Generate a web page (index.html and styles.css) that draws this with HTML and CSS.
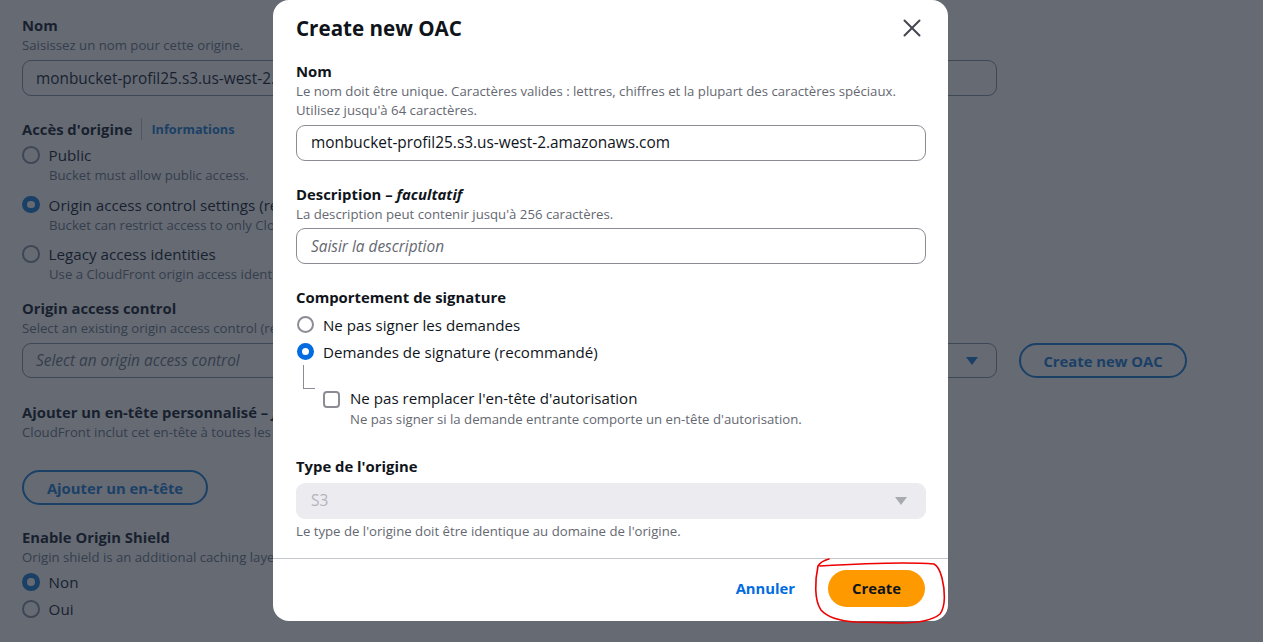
FILE: index.html
```html
<!DOCTYPE html>
<html lang="fr">
<head>
<meta charset="utf-8">
<title>Create new OAC</title>
<link rel="stylesheet" href="styles.css">
</head>
<body>
<div class="page">
  <section class="fld">
    <div class="lbl">Nom</div>
    <div class="dsc">Saisissez un nom pour cette origine.</div>
    <div class="inp bg-inp">monbucket-profil25.s3.us-west-2.amazonaws.com</div>
  </section>

  <section class="fld access">
    <div class="lbl-row"><span class="lbl">Accès d'origine</span><span class="sep"></span><span class="info">Informations</span></div>
    <div class="radios">
      <div class="ritem">
        <div class="rrow"><span class="radio"></span><span class="rtxt">Public</span></div>
        <div class="rdsc">Bucket must allow public access.</div>
      </div>
      <div class="ritem">
        <div class="rrow"><span class="radio on"></span><span class="rtxt">Origin access control settings (recommended)</span></div>
        <div class="rdsc">Bucket can restrict access to only CloudFront.</div>
      </div>
      <div class="ritem">
        <div class="rrow"><span class="radio"></span><span class="rtxt">Legacy access identities</span></div>
        <div class="rdsc">Use a CloudFront origin access identity (OAI) to access the S3 bucket.</div>
      </div>
    </div>
  </section>

  <section class="fld oac">
    <div class="lbl">Origin access control</div>
    <div class="dsc">Select an existing origin access control (recommended) or create a new control.</div>
    <div class="sel-row">
      <div class="inp bg-inp sel"><span class="ph">Select an origin access control</span><span class="caret bg-caret"></span></div>
      <span class="btn-normal">Create new OAC</span>
    </div>
  </section>

  <section class="fld hdr">
    <div class="lbl">Ajouter un en-tête personnalisé – <i>facultatif</i></div>
    <div class="dsc">CloudFront inclut cet en-tête à toutes les demandes qu'il envoie à votre origine.</div>
    <span class="btn-normal add">Ajouter un en-tête</span>
  </section>

  <section class="fld shield">
    <div class="lbl">Enable Origin Shield</div>
    <div class="dsc">Origin shield is an additional caching layer that can help reduce the load on your origin and help protect its availability.</div>
    <div class="radios tight">
      <div class="rrow"><span class="radio on"></span><span class="rtxt">Non</span></div>
      <div class="rrow"><span class="radio"></span><span class="rtxt">Oui</span></div>
    </div>
  </section>
</div>

<div class="overlay">
  <div class="modal" role="dialog">
    <div class="m-head">
      <h2 class="m-title">Create new OAC</h2>
      <span class="close" aria-label="Fermer">
        <svg width="18" height="18" viewBox="0 0 18 18"><path d="M1.5 1.5 L16.5 16.5 M16.5 1.5 L1.5 16.5" stroke="#424650" stroke-width="2" fill="none" stroke-linecap="round"/></svg>
      </span>
    </div>
    <div class="m-body">
      <div class="mf">
        <div class="m-lbl">Nom</div>
        <div class="m-dsc">Le nom doit être unique. Caractères valides : lettres, chiffres et la plupart des caractères spéciaux. Utilisez jusqu'à 64 caractères.</div>
        <div class="m-inp">monbucket-profil25.s3.us-west-2.amazonaws.com</div>
      </div>
      <div class="mf">
        <div class="m-lbl">Description – <i>facultatif</i></div>
        <div class="m-dsc">La description peut contenir jusqu'à 256 caractères.</div>
        <div class="m-inp ph2">Saisir la description</div>
      </div>
      <div class="mf sig">
        <div class="m-lbl">Comportement de signature</div>
        <div class="m-radios">
          <div class="m-rrow"><span class="m-radio"></span><span>Ne pas signer les demandes</span></div>
          <div class="m-rrow"><span class="m-radio on"></span><span>Demandes de signature (recommandé)</span></div>
        </div>
        <div class="nested">
          <span class="tree"></span>
          <div class="chk-item">
            <div class="chk-row"><span class="chk"></span><span>Ne pas remplacer l'en-tête d'autorisation</span></div>
            <div class="m-dsc chk-dsc">Ne pas signer si la demande entrante comporte un en-tête d'autorisation.</div>
          </div>
        </div>
      </div>
      <div class="mf type">
        <div class="m-lbl">Type de l'origine</div>
        <div class="m-sel-dis"><span>S3</span><span class="caret dis-caret"></span></div>
        <div class="m-dsc after">Le type de l'origine doit être identique au domaine de l'origine.</div>
      </div>
    </div>
    <div class="m-foot">
      <span class="link-btn">Annuler</span>
      <span class="primary">Create</span>
    </div>
  </div>
</div>

<svg class="annot" width="1263" height="642" viewBox="0 0 1263 642" aria-hidden="true">
  <path d="M829 559 Q821 561 818 566 C815 580 814 600 821 610 C828 618 840 621 856 622 L900 623 C920 623 933 620 940 614 C946 606 945 590 942 578 C940 570 938 566 934 564 C910 562 870 563 820 566" fill="none" stroke="#ee0000" stroke-width="1.6" stroke-linecap="round" stroke-linejoin="round"/>
</svg>
</body>
</html>
```

FILE: styles.css
```css
* { box-sizing: border-box; }
html, body { margin: 0; padding: 0; }
body {
  width: 1263px;
  height: 642px;
  overflow: hidden;
  background: #ffffff;
  font-family: "Open Sans", "Noto Sans", sans-serif;
  color: #000716;
  position: relative;
}

/* ---------- background page ---------- */
.page { padding: 14px 0 0 22px; width: 1190px; }
.fld { display: flex; flex-direction: column; align-items: flex-start; }
.lbl { font-size: 14.8px; line-height: 22px; font-weight: 700; color: #000716; }
.dsc { font-size: 13.2px; line-height: 19px; color: #5f6b7a; white-space: nowrap; }
.inp {
  margin-top: 5px;
  height: 36px;
  border: 1px solid #7d8998;
  border-radius: 9px;
  padding: 0 13px;
  display: flex;
  align-items: center;
  font-size: 15.4px;
  color: #000716;
}
.bg-inp { width: 975px; }
.access { margin-top: 22px; }
.lbl-row { display: flex; align-items: center; height: 22px; }
.sep { width: 1px; height: 22px; background: #b6bec9; margin: 0 9px 0 9px; }
.info { font-size: 12.7px; font-weight: 700; color: #0972d3; }
.radios { margin-top: 4px; display: flex; flex-direction: column; gap: 8.5px; }
.ritem { display: flex; flex-direction: column; }
.rrow { display: flex; align-items: center; height: 22px; }
.radio {
  width: 17.6px; height: 17.6px; border-radius: 50%;
  border: 2px solid #7d8998; background: #fff; flex: none;
  margin-right: 9px;
}
.radio.on { border: 5.5px solid #0972d3; }
.rtxt { font-size: 15.2px; color: #000716; white-space: nowrap; }
.rdsc { padding-left: 27px; font-size: 13.2px; line-height: 19px; color: #5f6b7a; white-space: nowrap; }
.oac { margin-top: 13px; }
.sel-row { display: flex; align-items: center; gap: 22px; margin-top: 5px; }
.sel-row .inp { margin-top: 0; height: 35px; }
.sel { justify-content: space-between; padding-right: 18px; }
.ph { font-style: italic; color: #5f6b7a; }
.caret { width: 0; height: 0; border-left: 6px solid transparent; border-right: 6px solid transparent; border-top: 8px solid #0972d3; }
.btn-normal {
  display: inline-flex; align-items: center; justify-content: center;
  height: 35px; padding: 0 22px;
  border: 2px solid #0972d3; border-radius: 20px;
  font-size: 14.8px; font-weight: 700; color: #0972d3; white-space: nowrap;
}
.sel-row .btn-normal { width: 168px; }
.hdr { margin-top: 23px; }
.add { margin-top: 28px; width: 186px; }
.shield { margin-top: 21px; }
.radios.tight { gap: 5px; }

/* ---------- overlay + modal ---------- */
.overlay {
  position: absolute; inset: 0;
  background: rgba(35, 43, 55, 0.7);
}
.modal {
  position: absolute; left: 273px; top: 0; width: 675px;
  background: #ffffff;
  border-radius: 16px;
  color: #0f141a;
  display: flex; flex-direction: column;
}
.m-head {
  display: flex; justify-content: space-between; align-items: center;
  padding: 16px 27px 0 23px;
}
.m-title { margin: 0; font-size: 20.6px; line-height: 24px; font-weight: 700; color: #0f141a; }
.close { display: flex; width: 18px; height: 18px; }
.m-body { padding: 20px 22px 17px 23px; display: flex; flex-direction: column; gap: 22px; }
.mf { display: flex; flex-direction: column; }
.m-lbl { font-size: 14.85px; line-height: 22px; font-weight: 700; color: #0f141a; }
.m-dsc { font-size: 13.2px; line-height: 19px; color: #656871; }
.m-inp {
  margin-top: 4.5px; height: 36px;
  border: 1px solid #8c8c94; border-radius: 9px;
  padding: 0 14px;
  display: flex; align-items: center;
  font-size: 15.4px; color: #0f141a;
}
.m-inp.ph2 { font-style: italic; color: #656871; }
.m-radios { margin-top: 5.5px; display: flex; flex-direction: column; gap: 5px; }
.m-rrow { display: flex; align-items: center; height: 22px; font-size: 15.1px; color: #0f141a; }
.m-radio {
  width: 17px; height: 17px; border-radius: 50%;
  border: 2px solid #8c8c94; flex: none; margin: 0 9px 0 1px;
}
.m-radio.on { border: 5.5px solid #006ce0; }
.nested { display: flex; padding-left: 7px; margin-top: 2px; }
.tree { flex: none; width: 12px; height: 24px; border-left: 1px solid #8c8c94; border-bottom: 1px solid #8c8c94; }
.chk-item { margin: 22px 0 0 8px; display: flex; flex-direction: column; }
.chk-row { display: flex; align-items: center; height: 22px; font-size: 15.1px; color: #0f141a; }
.chk { width: 17px; height: 17px; border: 2px solid #8c8c94; border-radius: 4px; margin: 3px 10px 0 0; flex: none; }
.chk-dsc { padding-left: 27px; margin-top: 1px; }
.type { margin-top: 4px; }
.m-sel-dis {
  margin-top: 6px; height: 36px; border-radius: 9px;
  background: #ebebf0;
  display: flex; align-items: center; justify-content: space-between;
  padding: 0 19px 0 15px;
  font-size: 15.4px; color: #b4b4bb;
}
.dis-caret { border-top-color: #a9a9b1; }
.m-dsc.after { margin-top: 3px; }
.m-foot {
  border-top: 1px solid #c6c6cd;
  padding: 11px 23px 14px 22px;
  display: flex; justify-content: flex-end; align-items: center; gap: 11px;
}
.link-btn { padding: 0 22px; font-size: 14.8px; font-weight: 700; color: #006ce0; }
.primary {
  display: inline-flex; align-items: center; justify-content: center;
  height: 37px; width: 97px; border-radius: 20px;
  background: #ff9900; color: #0f141a;
  font-size: 14.8px; font-weight: 700;
}

.annot { position: absolute; left: 0; top: 0; pointer-events: none; }
```
